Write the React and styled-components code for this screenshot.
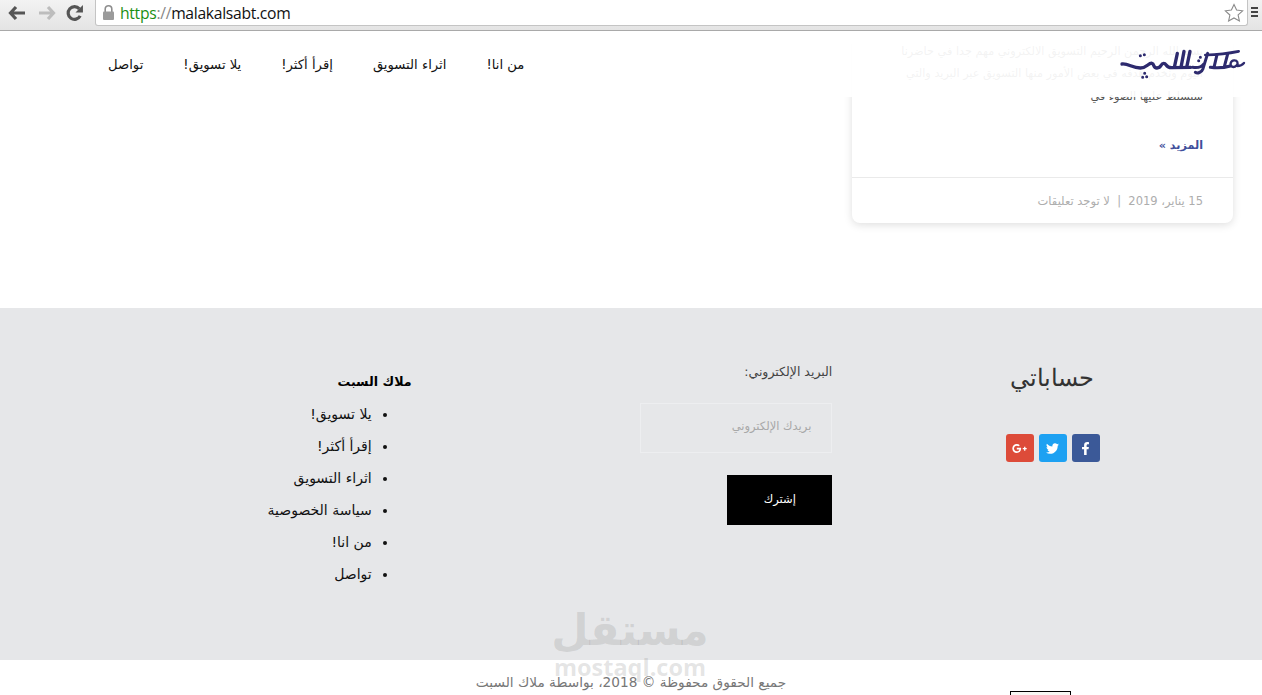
import React from 'react';
import styled, { createGlobalStyle } from 'styled-components';
import { FaFacebookF, FaTwitter, FaGooglePlusG } from 'react-icons/fa';

const Global = createGlobalStyle`
  html, body { margin: 0; padding: 0; height: 100%; overflow: hidden; background: #fff; }
  body { font-family: "DejaVu Sans", sans-serif; }
`;

const Page = styled.div`
  width: 1262px;
  height: 695px;
  position: relative;
  overflow: hidden;
  display: flex;
  flex-direction: column;
`;

const Chrome = styled.div`
  height: 31px;
  flex: none;
  box-sizing: border-box;
  display: flex;
  align-items: flex-start;
  background: linear-gradient(#f3f3f3, #e4e4e4);
  border-bottom: 1px solid #a9a9a9;
`;
const NavIcons = styled.div`
  width: 95px;
  height: 25px;
  flex: none;
  display: flex;
  align-items: center;
  gap: 10px;
  padding-left: 8px;
  box-sizing: border-box;
`;
const AddressBar = styled.div`
  width: 1153px;
  height: 26px;
  box-sizing: border-box;
  flex: none;
  background: #fff;
  border: 1px solid #c4c4c4;
  border-top: none;
  border-radius: 0 0 3px 3px;
  display: flex;
  align-items: center;
  padding: 0 3px 0 6px;
  gap: 5px;
`;
const Url = styled.div`
  flex: 1;
  font: 15.7px "Open Sans", "Noto Sans", sans-serif;
  color: #111;
  letter-spacing: -0.3px;
`;
const Https = styled.span` color: #1a8f12; `;
const Slashes = styled.span` color: #888; `;
const MenuBars = styled.div`
  margin: 7px 0 0 3px;
  width: 7px;
  height: 11px;
  background: repeating-linear-gradient(#444 0 2px, transparent 2px 4px);
`;

const Main = styled.main`
  flex: none;
  height: 277px;
  overflow: hidden;
  direction: rtl;
  padding-right: 29px;
  display: flex;
  align-items: flex-end;
  box-sizing: border-box;
  padding-bottom: 85px;
`;
const Card = styled.article`
  width: 381px;
  background: #fff;
  border-radius: 0 0 8px 8px;
  box-shadow: 0 2px 8px rgba(0, 0, 0, 0.13);
`;
const CardBody = styled.div`
  padding: 4px 30px 21px 30px;
`;
const Excerpt = styled.p`
  margin: 0 0 28px;
  font-size: 11.25px;
  line-height: 22.5px;
  color: #555;
`;
const More = styled.a`
  font-size: 11.2px;
  font-weight: 600;
  color: #3f4f9b;
  line-height: 20px;
  display: block;
`;
const CardMeta = styled.div`
  border-top: 1px solid #eaeaea;
  padding: 14px 30px 13px;
  font-size: 11.5px;
  line-height: 18px;
  color: #adadad;
`;

const SiteHeader = styled.header`
  position: absolute;
  top: 31px;
  left: 0;
  right: 0;
  height: 66px;
  direction: rtl;
  background: rgba(255, 255, 255, 0.93);
  display: flex;
  align-items: center;
  justify-content: space-between;
  padding: 0 12px 0 108px;
`;
const Menu = styled.nav`
  display: flex;
  gap: 40px;
  font-size: 13.2px;
  color: #111;
`;

const Footer = styled.footer`
  flex: none;
  height: 352px;
  background: #e6e7e9;
  direction: rtl;
  display: grid;
  grid-template-columns: repeat(3, 1fr);
`;
const AccountsCol = styled.section`
  display: flex;
  flex-direction: column;
  align-items: center;
  padding-top: 50px;
`;
const AccountsTitle = styled.h3`
  margin: 0;
  height: 38px;
  font: 400 24px/38px "Noto Sans", sans-serif;
  color: #333;
`;
const Socials = styled.div`
  display: flex;
  gap: 5px;
  margin-top: 38px;
  direction: ltr;
  padding-left: 2px;
`;
const SocialButton = styled.a`
  width: 28px;
  height: 28px;
  border-radius: 3px;
  background: ${p => p.$bg};
  color: #fff;
  display: flex;
  align-items: center;
  justify-content: center;
  font-size: ${p => p.$size}px;
`;
const FormCol = styled.section`
  padding: 54px 9px 0 0;
  display: flex;
  flex-direction: column;
  align-items: flex-start;
`;
const FieldLabel = styled.label`
  font-size: 12.5px;
  line-height: 20px;
  color: #444;
`;
const EmailInput = styled.div`
  width: 192px;
  height: 50px;
  box-sizing: border-box;
  margin-top: 21px;
  border: 1px solid #edeef0;
  padding-right: 20px;
  font-size: 11.5px;
  line-height: 45px;
  color: #a8a8a8;
`;
const Subscribe = styled.button`
  width: 105px;
  height: 50px;
  margin-top: 22px;
  border: 0;
  background: #000;
  color: #fff;
  padding: 0 0 3px;
  font: 11.5px "DejaVu Sans", sans-serif;
`;
const LinksCol = styled.section`
  padding: 63px 9px 0 0;
`;
const LinksTitle = styled.h4`
  margin: 0;
  font-size: 12.7px;
  line-height: 22px;
  font-weight: 700;
  color: #000;
`;
const LinkList = styled.ul`
  margin: 5px 0 0;
  padding: 0 40px 0 0;
  font-size: 14px;
  color: #111;
`;
const LinkItem = styled.li`
  height: 32px;
  line-height: 32px;
`;

const Bottom = styled.div`
  flex: 1;
  direction: rtl;
  position: relative;
  background: #fff;
`;
const Copyright = styled.div`
  width: 1262px;
  padding-top: 12px;
  text-align: center;
  font-size: 13.7px;
  line-height: 20px;
  color: #777;
`;
const ToTop = styled.div`
  position: absolute;
  left: 1010px;
  top: 31px;
  width: 61px;
  height: 20px;
  box-sizing: border-box;
  border: 1px solid #000;
  background: #f8f8f4;
`;
const Watermark = styled.div`
  position: absolute;
  left: 504px;
  top: 604px;
  width: 252px;
  text-align: center;
  color: rgba(120, 120, 120, 0.2);
  pointer-events: none;
`;
const WatermarkAr = styled.div`
  font: 700 43px/52px "DejaVu Sans", sans-serif;
  direction: rtl;
`;
const WatermarkEn = styled.div`
  font: 700 23.5px/20px "Open Sans", sans-serif;
  margin-top: 1px;
`;

const BackIcon = ({ color }) => (
  <svg width="19" height="16" viewBox="0 0 19 16">
    <path d="M8 2 2.5 8 8 14M3 8h14" fill="none" stroke={color} strokeWidth="3.2" />
  </svg>
);
const ForwardIcon = ({ color }) => (
  <svg width="19" height="16" viewBox="0 0 19 16">
    <path d="M11 2l5.5 6L11 14M16 8H2" fill="none" stroke={color} strokeWidth="3.2" />
  </svg>
);
const ReloadIcon = () => (
  <svg width="18" height="18" viewBox="0 0 17 17">
    <path d="M13.4 11.2A6 6 0 1 1 12.6 4.6" fill="none" stroke="#555" strokeWidth="3" />
    <path d="M16 1v7H9z" fill="#555" />
  </svg>
);
const LockIcon = () => (
  <svg width="13" height="17" viewBox="0 0 13 17">
    <path d="M3.2 8V5a3.3 3.3 0 0 1 6.6 0v3" fill="none" stroke="#8d8d8d" strokeWidth="1.6" />
    <rect x="1" y="7.5" width="11" height="8.5" rx="1" fill="#9b9b9b" />
  </svg>
);
const StarIcon = () => (
  <svg width="20" height="19" viewBox="0 0 20 19">
    <path d="M10 1.5l2.6 5.6 6 .7-4.5 4.1 1.3 6L10 15l-5.4 3 1.3-6L1.4 7.8l6-.7z" fill="#fff" stroke="#8a8a8a" strokeWidth="1.1" />
  </svg>
);
const Logo = () => (
  <svg width="135" height="40" viewBox="0 0 403 120" fill="none" stroke="#2d2a6e" strokeLinecap="round" strokeLinejoin="round">
    <path d="M20 60C40 58 50 72 75 72C95 72 100 55 110 58C118 60 112 72 125 72C140 72 135 58 145 58C155 58 150 72 170 71L226 70" strokeWidth="10" />
    <path d="M186 28L177 70M206 22L197 70M224 22L214 70" strokeWidth="10" />
    <path d="M232 70C250 73 258 70 265 60M277 28L263 74C259 86 246 89 240 85" strokeWidth="9" />
    <path d="M270 33C300 32 340 28 370 22" strokeWidth="8" />
    <path d="M305 32L296 70M337 30L327 68M285 70C300 72 325 72 345 66" strokeWidth="9" />
    <path d="M350 68C342 62 346 50 356 49C366 48 370 58 364 64C360 68 354 70 350 68ZM366 66C374 66 382 62 386 57" strokeWidth="7" />
    <path d="M75 35h.1M87 32h.1M82 100h.1M94 98h.1M88 88h.1M250 50h.1M255 40h.1" strokeWidth="9" />
  </svg>
);

const menu = ['من انا!', 'اثراء التسويق', 'إقرأ أكثر!', 'يلا تسويق!', 'تواصل'];
const links = ['يلا تسويق!', 'إقرأ أكثر!', 'اثراء التسويق', 'سياسة الخصوصية', 'من انا!', 'تواصل'];

export default function App() {
  return (
    <>
      <Global />
      <Page>
        <Chrome>
          <NavIcons>
            <BackIcon color="#555" />
            <ForwardIcon color="#bdbdbd" />
            <ReloadIcon />
          </NavIcons>
          <AddressBar>
            <LockIcon />
            <Url><Https>https</Https><Slashes>://</Slashes>malakalsabt.com</Url>
            <StarIcon />
          </AddressBar>
          <MenuBars />
        </Chrome>
        <Main>
          <Card>
            <CardBody>
              <Excerpt>
                بسم الله الرحمن الرحيم التسويق الالكتروني مهم جدا في حاضرنا اليوم ونخدم هدفه في بعض الأمور منها التسويق عبر البريد والتي سنسلط عليها الضوء في
              </Excerpt>
              <More>المزيد »</More>
            </CardBody>
            <CardMeta>15 يناير، 2019 &nbsp;|&nbsp; لا توجد تعليقات</CardMeta>
          </Card>
        </Main>
        <Footer>
          <AccountsCol>
            <AccountsTitle>حساباتي</AccountsTitle>
            <Socials>
              <SocialButton $bg="#dd4b39" $size={15}><FaGooglePlusG /></SocialButton>
              <SocialButton $bg="#1da1f2" $size={13}><FaTwitter /></SocialButton>
              <SocialButton $bg="#3b5998" $size={13}><FaFacebookF /></SocialButton>
            </Socials>
          </AccountsCol>
          <FormCol>
            <FieldLabel>البريد الإلكتروني:</FieldLabel>
            <EmailInput>بريدك الإلكتروني</EmailInput>
            <Subscribe>إشترك</Subscribe>
          </FormCol>
          <LinksCol>
            <LinksTitle>ملاك السبت</LinksTitle>
            <LinkList>
              {links.map(l => <LinkItem key={l}>{l}</LinkItem>)}
            </LinkList>
          </LinksCol>
        </Footer>
        <Bottom>
          <Copyright>جميع الحقوق محفوظة © 2018، بواسطة ملاك السبت</Copyright>
          <ToTop />
        </Bottom>
        <SiteHeader>
          <Logo />
          <Menu>{menu.map(m => <span key={m}>{m}</span>)}</Menu>
        </SiteHeader>
        <Watermark>
          <WatermarkAr>مستقل</WatermarkAr>
          <WatermarkEn>mostaql.com</WatermarkEn>
        </Watermark>
      </Page>
    </>
  );
}
